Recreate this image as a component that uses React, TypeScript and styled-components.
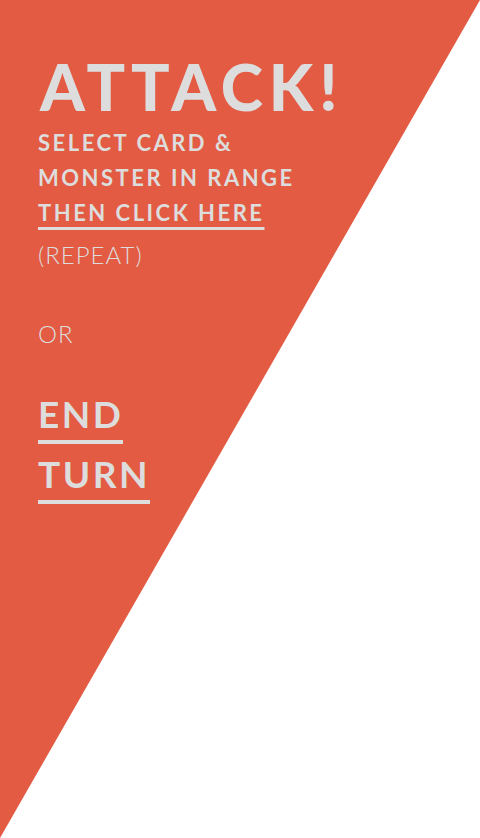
import React from "react";
import styled, { createGlobalStyle } from "styled-components";

const Global = createGlobalStyle`
  html, body { margin: 0; padding: 0; }
  body { font-family: Lato, "Open Sans", sans-serif; }
`;

const Screen = styled.div`
  width: 480px;
  height: 838px;
  background: linear-gradient(to bottom right, #e35b43 calc(50% - 0.5px), #ffffff calc(50% + 0.5px));
  color: #dddddd;
  padding: 48px 0 0 38px;
  box-sizing: border-box;
  display: flex;
  flex-direction: column;
`;

const Title = styled.h1`
  margin: 0;
  font-size: 64px;
  font-weight: 900;
  letter-spacing: 6px;
  line-height: 77px;
  padding-left: 2px;
`;

const Instructions = styled.div`
  display: flex;
  flex-direction: column;
  align-items: flex-start;
`;

const Step = styled.div<{ $link?: boolean }>`
  font-size: 22px;
  font-weight: 700;
  letter-spacing: 2.5px;
  line-height: 35px;
  text-decoration: ${(p) => (p.$link ? "underline" : "none")};
  text-decoration-thickness: 3px;
  text-underline-offset: 6px;
  cursor: ${(p) => (p.$link ? "pointer" : "default")};
`;

const Light = styled.div<{ $gap?: number }>`
  font-size: 24px;
  font-weight: 300;
  letter-spacing: 1px;
  line-height: 36px;
  margin-top: ${(p) => p.$gap ?? 0}px;
`;

const EndTurn = styled.div`
  margin-top: 42px;
  display: flex;
  flex-direction: column;
  align-items: flex-start;
  gap: 10px;
  cursor: pointer;
`;

const Big = styled.span`
  font-size: 37px;
  font-weight: 700;
  letter-spacing: 2.5px;
  line-height: 40px;
  padding-bottom: 6px;
  border-bottom: 4px solid #dddddd;
`;

export default function App() {
  return (
    <>
      <Global />
      <Screen>
        <Title>ATTACK!</Title>
        <Instructions>
          <Step>SELECT CARD &amp;</Step>
          <Step>MONSTER IN RANGE</Step>
          <Step $link>THEN CLICK HERE</Step>
        </Instructions>
        <Light $gap={7}>(REPEAT)</Light>
        <Light $gap={43}>OR</Light>
        <EndTurn>
          <Big>END</Big>
          <Big>TURN</Big>
        </EndTurn>
      </Screen>
    </>
  );
}
